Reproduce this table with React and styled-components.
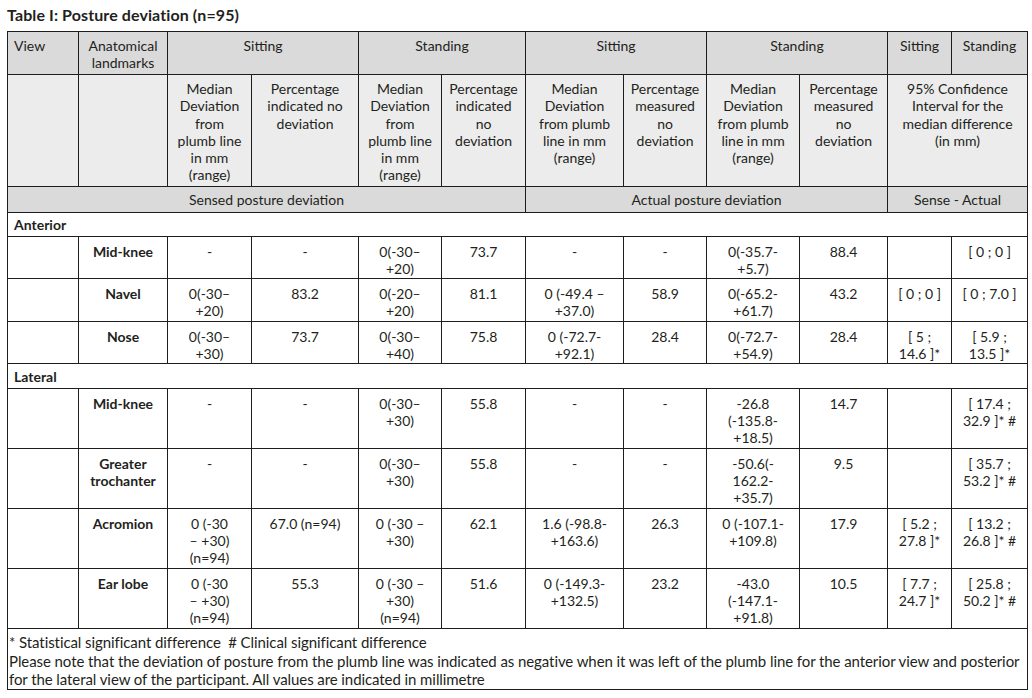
import React from 'react'
import styled, { createGlobalStyle } from 'styled-components'

const GlobalStyle = createGlobalStyle`
  html, body {
    margin: 0;
    padding: 0;
    background: #fff;
  }
  body {
    font-family: "Lato", "Open Sans", sans-serif;
    color: #231f20;
  }
`

const Page = styled.div`
  padding: 5px 0 0 7px;
  width: 1032px;
  box-sizing: border-box;
`

const Title = styled.h1`
  margin: 0;
  height: 26px;
  font-size: 16px;
  line-height: 20px;
  font-weight: 700;
  letter-spacing: 0.1px;
`

const Table = styled.table`
  width: 1020px;
  border-collapse: collapse;
  table-layout: fixed;
  font-size: 14px;
  line-height: 17px;
`

const Row = styled.tr`
  height: ${(p) => p.$h}px;
`

const Head = styled.th`
  border: 1px solid #1d1d1d;
  background: ${(p) => (p.$light ? '#ececec' : '#dadada')};
  font-weight: 400;
  line-height: 17.3px;
  text-align: ${(p) => p.$align || 'center'};
  vertical-align: ${(p) => p.$valign || 'top'};
  padding: ${(p) => (p.$valign === 'middle' ? '0 4px' : '5px 4px 0')};
  padding-left: ${(p) => (p.$align === 'left' ? '6px' : '4px')};
  white-space: pre-line;
`

const Cell = styled.td`
  border: 1px solid #1d1d1d;
  text-align: center;
  vertical-align: top;
  padding: 6px 3px 0;
  font-weight: ${(p) => (p.$bold ? 700 : 400)};
  white-space: pre-line;
`

const Group = styled.td`
  border: 1px solid #1d1d1d;
  padding: 0 6px;
  font-weight: 700;
  vertical-align: middle;
`

const Note = styled.td`
  border: 1px solid #1d1d1d;
  padding: 4px 2px 0 1px;
  font-size: 15px;
  line-height: 18.5px;
  letter-spacing: -0.08px;
  vertical-align: top;
  white-space: nowrap;
  overflow: hidden;
`

const widths = [71, 89, 84, 107, 83, 84, 98, 83, 93, 88, 64, 76]

const median = 'Median\nDeviation\nfrom\nplumb line\nin mm\n(range)'
const medianWide = 'Median\nDeviation\nfrom plumb\nline in mm\n(range)'

const groups = [
  {
    name: 'Anterior',
    h: 24,
    rows: [
      { label: 'Mid-knee', h: 42, v: ['-', '-', '0(-30–\n+20)', '73.7', '-', '-', '0(-35.7-\n+5.7)', '88.4', '', '[ 0 ; 0 ]'] },
      { label: 'Navel', h: 43, v: ['0(-30–\n+20)', '83.2', '0(-20–\n+20)', '81.1', '0 (-49.4 –\n+37.0)', '58.9', '0(-65.2-\n+61.7)', '43.2', '[ 0 ; 0 ]', '[ 0 ; 7.0 ]'] },
      { label: 'Nose', h: 42, v: ['0(-30–\n+30)', '73.7', '0(-30–\n+40)', '75.8', '0 (-72.7-\n+92.1)', '28.4', '0(-72.7-\n+54.9)', '28.4', '[ 5 ;\n14.6 ]*', '[ 5.9 ;\n13.5 ]*'] },
    ],
  },
  {
    name: 'Lateral',
    h: 25,
    rows: [
      { label: 'Mid-knee', h: 60, v: ['-', '-', '0(-30–\n+30)', '55.8', '-', '-', '-26.8\n(-135.8-\n+18.5)', '14.7', '', '[ 17.4 ;\n32.9 ]* #'] },
      { label: 'Greater\ntrochanter', h: 60, v: ['-', '-', '0(-30–\n+30)', '55.8', '-', '-', '-50.6(-\n162.2-\n+35.7)', '9.5', '', '[ 35.7 ;\n53.2 ]* #'] },
      { label: 'Acromion', h: 60, v: ['0 (-30\n– +30)\n(n=94)', '67.0 (n=94)', '0 (-30 –\n+30)', '62.1', '1.6 (-98.8-\n+163.6)', '26.3', '0 (-107.1-\n+109.8)', '17.9', '[ 5.2 ;\n27.8 ]*', '[ 13.2 ;\n26.8 ]* #'] },
      { label: 'Ear lobe', h: 60, v: ['0 (-30\n– +30)\n(n=94)', '55.3', '0 (-30 –\n+30)\n(n=94)', '51.6', '0 (-149.3-\n+132.5)', '23.2', '-43.0\n(-147.1-\n+91.8)', '10.5', '[ 7.7 ;\n24.7 ]*', '[ 25.8 ;\n50.2 ]* #'] },
    ],
  },
]

const App = () => {
  return (
    <Page>
      <GlobalStyle />
      <Title>Table I: Posture deviation (n=95)</Title>
      <Table>
        <colgroup>
          {widths.map((w, i) => (
            <col key={i} style={{ width: w }} />
          ))}
        </colgroup>
        <thead>
          <Row $h={43}>
            <Head $align="left">View</Head>
            <Head>{'Anatomical\nlandmarks'}</Head>
            <Head colSpan={2}>Sitting</Head>
            <Head colSpan={2}>Standing</Head>
            <Head colSpan={2}>Sitting</Head>
            <Head colSpan={2}>Standing</Head>
            <Head>Sitting</Head>
            <Head>Standing</Head>
          </Row>
          <Row $h={112}>
            <Head $light></Head>
            <Head $light></Head>
            <Head $light>{median}</Head>
            <Head $light>{'Percentage\nindicated no\ndeviation'}</Head>
            <Head $light>{median}</Head>
            <Head $light>{'Percentage\nindicated\nno\ndeviation'}</Head>
            <Head $light>{medianWide}</Head>
            <Head $light>{'Percentage\nmeasured\nno\ndeviation'}</Head>
            <Head $light>{medianWide}</Head>
            <Head $light>{'Percentage\nmeasured\nno\ndeviation'}</Head>
            <Head $light colSpan={2}>{'95% Confidence\nInterval for the\nmedian difference\n(in mm)'}</Head>
          </Row>
          <Row $h={26}>
            <Head colSpan={6} $valign="middle">Sensed posture deviation</Head>
            <Head colSpan={4} $valign="middle">Actual posture deviation</Head>
            <Head colSpan={2} $valign="middle">Sense - Actual</Head>
          </Row>
        </thead>
        <tbody>
          {groups.map((g) => (
            <React.Fragment key={g.name}>
              <Row $h={g.h}>
                <Group colSpan={12}>{g.name}</Group>
              </Row>
              {g.rows.map((r) => (
                <Row key={r.label} $h={r.h}>
                  <Cell></Cell>
                  <Cell $bold>{r.label}</Cell>
                  {r.v.map((val, i) => (
                    <Cell key={i}>{val}</Cell>
                  ))}
                </Row>
              ))}
            </React.Fragment>
          ))}
          <Row $h={58}>
            <Note colSpan={12}>
              * Statistical significant difference&nbsp; # Clinical significant difference
              <br />
              Please note that the deviation of posture from the plumb line was indicated as negative when it was left of the plumb line for the anterior view and posterior
              <br />
              for the lateral view of the participant. All values are indicated in millimetre
            </Note>
          </Row>
        </tbody>
      </Table>
    </Page>
  )
}

export default App
